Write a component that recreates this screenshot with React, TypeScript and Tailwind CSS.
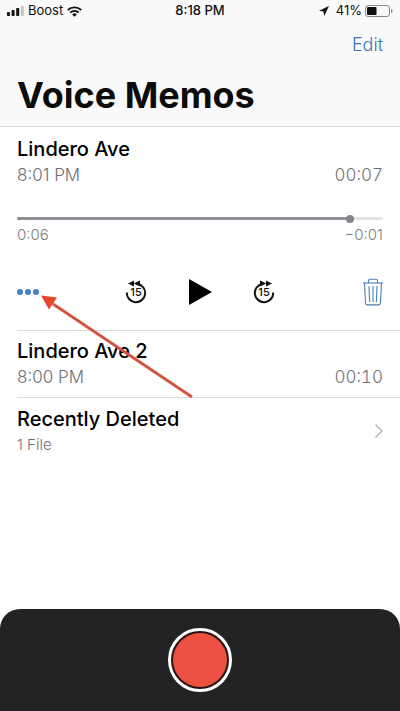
import { useState } from "react";

function SignalIcon() {
  return (
    <svg width="17" height="10" viewBox="0 0 17 10" aria-hidden="true">
      <rect x="0" y="6" width="3" height="4" rx="0.7" fill="#111" />
      <rect x="4.6" y="4" width="3" height="6" rx="0.7" fill="#111" />
      <rect x="9.2" y="2" width="3" height="8" rx="0.7" fill="#111" />
      <rect x="13.8" y="0" width="3" height="10" rx="0.7" fill="#c4c4c4" />
    </svg>
  );
}

function WifiIcon() {
  return (
    <svg width="15" height="11" viewBox="0 0 15 11" fill="none" stroke="#111" strokeWidth="1.8" aria-hidden="true">
      <path d="M0.8 4a9.6 9.6 0 0 1 13.4 0" />
      <path d="M3.2 6.6a6.1 6.1 0 0 1 8.6 0" />
      <path d="M7.5 10.8 5.1 8.4a3.5 3.5 0 0 1 4.8 0z" fill="#111" stroke="none" />
    </svg>
  );
}

function LocationIcon() {
  return (
    <svg width="10" height="10" viewBox="0 0 10 10" aria-hidden="true">
      <path d="M10 0 0 4.8l4.4 0.8L5.2 10z" fill="#111" />
    </svg>
  );
}

function BatteryIcon() {
  return (
    <svg width="28" height="12" viewBox="0 0 28 12" aria-hidden="true">
      <rect x="0.5" y="0.5" width="24" height="11" rx="2.5" fill="none" stroke="#8b8b8b" />
      <rect x="2" y="2" width="9.5" height="8" rx="0.8" fill="#111" />
      <path d="M26 4v4c1-0.3 1.5-1.1 1.5-2s-0.5-1.7-1.5-2z" fill="#8b8b8b" />
    </svg>
  );
}

function SkipIcon({ forward = false }: { forward?: boolean }) {
  return (
    <svg width="22" height="24" viewBox="0 0 22 24" aria-hidden="true">
      <g transform={forward ? "translate(22 0) scale(-1 1)" : undefined}>
        <path d="M12.5 3.9A9.2 9.2 0 1 1 1.8 12.5" fill="none" stroke="#111" strokeWidth="2" />
        <path d="M9 0.6v6L3 3.6zM15 0.6v6L8.6 3.6z" fill="#111" />
      </g>
      <text x="11" y="16" textAnchor="middle" fontSize="11" fontWeight="500" fill="#111">
        15
      </text>
    </svg>
  );
}

function TrashIcon() {
  return (
    <svg width="20" height="28" viewBox="0 0 20 28" fill="none" stroke="#4a7db8" strokeWidth="1.1" aria-hidden="true">
      <path d="M0 5h20" />
      <path d="M5.5 5V3a1.8 1.8 0 0 1 1.8-1.8h5.4A1.8 1.8 0 0 1 14.5 3v2" />
      <path d="M1.5 5l1 20a2 2 0 0 0 2 1.9h11a2 2 0 0 0 2-1.9l1-20" />
      <path d="M6 8l0.6 16M10 8v16M14 8l-0.6 16" />
    </svg>
  );
}

function StatusBar() {
  return (
    <div className="grid h-[22px] grid-cols-3 items-center px-[7px] text-[13px] text-[#111]">
      <div className="flex items-center gap-1">
        <SignalIcon />
        <span>Boost</span>
        <WifiIcon />
      </div>
      <span className="text-center font-medium">8:18 PM</span>
      <div className="flex items-center justify-end gap-[3px]">
        <LocationIcon />
        <span className="ml-1">41%</span>
        <BatteryIcon />
      </div>
    </div>
  );
}

function MemoInfo({ name, time, length }: { name: string; time: string; length: string }) {
  return (
    <>
      <h2 className="text-[20px] font-medium leading-7 text-black">{name}</h2>
      <div className="flex justify-between text-[17px] font-light leading-6 text-[#6e6e73]">
        <span>{time}</span>
        <span className="tabular-nums">{length}</span>
      </div>
    </>
  );
}

function Player() {
  const [position, setPosition] = useState(92);

  return (
    <>
      <input
        type="range"
        aria-label="Playback position"
        value={position}
        onChange={(e) => setPosition(Number(e.target.value))}
        className="mt-[30px] block h-[3px] w-full appearance-none rounded-full [&::-webkit-slider-thumb]:size-2 [&::-webkit-slider-thumb]:appearance-none [&::-webkit-slider-thumb]:rounded-full [&::-webkit-slider-thumb]:bg-[#85848a]"
        style={{
          background: `linear-gradient(to right, #8e8d93 ${position}%, #e3e3e5 ${position}%)`,
        }}
      />
      <div className="mt-[3px] flex justify-between text-[15px] font-light leading-6 text-[#7c7c80]">
        <span>0:06</span>
        <span>−0:01</span>
      </div>
      <div className="mt-6 flex h-[42px] items-center justify-between">
        <button type="button" aria-label="More" className="flex w-[22px] gap-[2px]">
          <span className="size-[6px] rounded-full bg-[#467bc6]" />
          <span className="size-[6px] rounded-full bg-[#467bc6]" />
          <span className="size-[6px] rounded-full bg-[#467bc6]" />
        </button>
        <div className="flex w-[150px] items-center justify-between">
          <button type="button" aria-label="Back 15 seconds">
            <SkipIcon />
          </button>
          <button type="button" aria-label="Play">
            <svg width="24" height="26" viewBox="0 0 24 26" aria-hidden="true">
              <path d="M1 0v26l23-13z" fill="#000" />
            </svg>
          </button>
          <button type="button" aria-label="Forward 15 seconds">
            <SkipIcon forward />
          </button>
        </div>
        <button type="button" aria-label="Delete" className="flex w-[22px] justify-end">
          <TrashIcon />
        </button>
      </div>
    </>
  );
}

export default function App() {
  return (
    <div className="flex min-h-screen flex-col bg-white font-['Inter',sans-serif]">
      <header className="border-b border-[#dcdcdc] bg-[#f9f9f9]">
        <StatusBar />
        <div className="flex justify-end px-[17px] pt-[11px]">
          <button type="button" className="text-[18px] font-light leading-6 text-[#3a73b8]">
            Edit
          </button>
        </div>
        <h1 className="px-[17px] pb-[7px] pt-[14px] text-[36px] font-bold leading-[48px] text-[#0c0c0c]">
          Voice Memos
        </h1>
      </header>

      <main className="relative">
        <section className="pt-2">
          <div className="px-[17px]">
            <MemoInfo name="Lindero Ave" time="8:01 PM" length="00:07" />
            <Player />
          </div>
          <div className="ml-[17px] mt-[17px] border-b border-[#dcdcdc]" />
        </section>

        <section className="ml-[17px] border-b border-[#dcdcdc] pb-2 pr-[17px] pt-[6px]">
          <MemoInfo name="Lindero Ave 2" time="8:00 PM" length="00:10" />
        </section>

        <a href="#recently-deleted" className="flex items-center justify-between px-[17px] pt-[7px]">
          <div>
            <h2 className="text-[20px] font-medium leading-7 text-black">Recently Deleted</h2>
            <p className="text-[15px] font-light leading-6 text-[#6e6e73]">1 File</p>
          </div>
          <svg width="8" height="14" viewBox="0 0 8 14" fill="none" stroke="#b9b9bb" strokeWidth="1.5" aria-hidden="true">
            <path d="M0.5 0.5 7 7 0.5 13.5" />
          </svg>
        </a>

        {/* callout arrow pointing at the More button */}
        <svg
          width="152"
          height="104"
          viewBox="0 0 152 104"
          aria-hidden="true"
          className="pointer-events-none absolute left-[41px] top-[168px]"
        >
          <path d="M12 9 151 102" stroke="#d2533f" strokeWidth="2.8" />
          <path d="M0 0.5 16 2.5 8 14.5z" fill="#e5472c" />
        </svg>
      </main>

      <footer className="mt-auto flex justify-center rounded-t-[20px] bg-[#232323] py-[19px]">
        <button
          type="button"
          aria-label="Record"
          className="flex size-16 items-center justify-center rounded-full border-[3px] border-white bg-[#2a1413]"
        >
          <span className="size-[54px] rounded-full bg-[#eb5040]" />
        </button>
      </footer>
    </div>
  );
}
